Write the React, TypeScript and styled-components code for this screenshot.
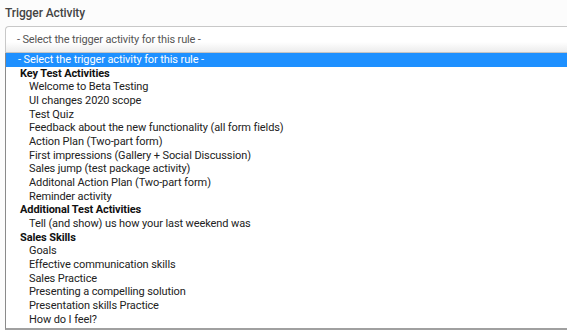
import React from 'react';
import styled, { createGlobalStyle } from 'styled-components';

const GlobalStyle = createGlobalStyle`
  html, body {
    margin: 0;
    padding: 0;
    background: #fcfcfc;
    overflow: hidden;
  }
  body {
    font-family: Roboto, 'Liberation Sans', Arial, sans-serif;
  }
`;

type Group = { label: string; options: string[] };

const groups: Group[] = [
  {
    label: 'Key Test Activities',
    options: [
      'Welcome to Beta Testing',
      'UI changes 2020 scope',
      'Test Quiz',
      'Feedback about the new functionality (all form fields)',
      'Action Plan (Two-part form)',
      'First impressions (Gallery + Social Discussion)',
      'Sales jump (test package activity)',
      'Additonal Action Plan (Two-part form)',
      'Reminder activity',
    ],
  },
  {
    label: 'Additional Test Activities',
    options: ['Tell (and show) us how your last weekend was'],
  },
  {
    label: 'Sales Skills',
    options: [
      'Goals',
      'Effective communication skills',
      'Sales Practice',
      'Presenting a compelling solution',
      'Presentation skills Practice',
      'How do I feel?',
    ],
  },
];

const placeholder = '- Select the trigger activity for this rule -';

const App: React.FC = () => {
  return (
    <>
      <GlobalStyle />
      <Page>
        <FieldLabel>Trigger Activity</FieldLabel>
        <SelectBox>{placeholder}</SelectBox>
        <ListBox>
          <Option $highlighted>{placeholder}</Option>
          {groups.map((g) => (
            <React.Fragment key={g.label}>
              <GroupLabel>{g.label}</GroupLabel>
              {g.options.map((o) => (
                <Option key={o}>{o}</Option>
              ))}
            </React.Fragment>
          ))}
        </ListBox>
      </Page>
    </>
  );
};

const Page = styled.div`
  width: 567px;
  height: 330px;
  display: flex;
  flex-direction: column;
  padding-left: 5px;
  box-sizing: border-box;
  overflow: hidden;
`;

const FieldLabel = styled.div`
  font-size: 12px;
  font-weight: 500;
  color: #444;
  line-height: 14px;
  padding-top: 6px;
  height: 20px;
  box-sizing: border-box;
  letter-spacing: -0.1px;
`;

const SelectBox = styled.div`
  margin-top: 6px;
  height: 27px;
  box-sizing: border-box;
  border: 1px solid #c8c8c8;
  border-right: none;
  border-bottom-color: #c4c4c4;
  border-radius: 4px 0 0 0;
  background: linear-gradient(to bottom, #fff 0%, #fff 60%, #ececec 100%);
  font-size: 11px;
  letter-spacing: -0.15px;
  color: #555;
  line-height: 25px;
  padding-left: 11px;
  white-space: nowrap;
`;

const ListBox = styled.div`
  flex: 1;
  box-sizing: border-box;
  background: #fff;
  border-left: 1px solid #8a8a8a;
  border-bottom: 2px solid #a0a0a0;
  display: flex;
  flex-direction: column;
`;

const Option = styled.div<{ $highlighted?: boolean }>`
  height: 13.68px;
  line-height: 13.68px;
  font-size: 11px;
  letter-spacing: -0.1px;
  white-space: nowrap;
  padding-left: ${(p) => (p.$highlighted ? '12px' : '23px')};
  color: ${(p) => (p.$highlighted ? '#fff' : '#222')};
  background: ${(p) => (p.$highlighted ? '#1e90ff' : 'transparent')};
`;

const GroupLabel = styled.div`
  height: 13.68px;
  line-height: 13.68px;
  font-size: 11px;
  font-weight: 700;
  letter-spacing: -0.1px;
  color: #111;
  padding-left: 14px;
  white-space: nowrap;
`;

export default App;
